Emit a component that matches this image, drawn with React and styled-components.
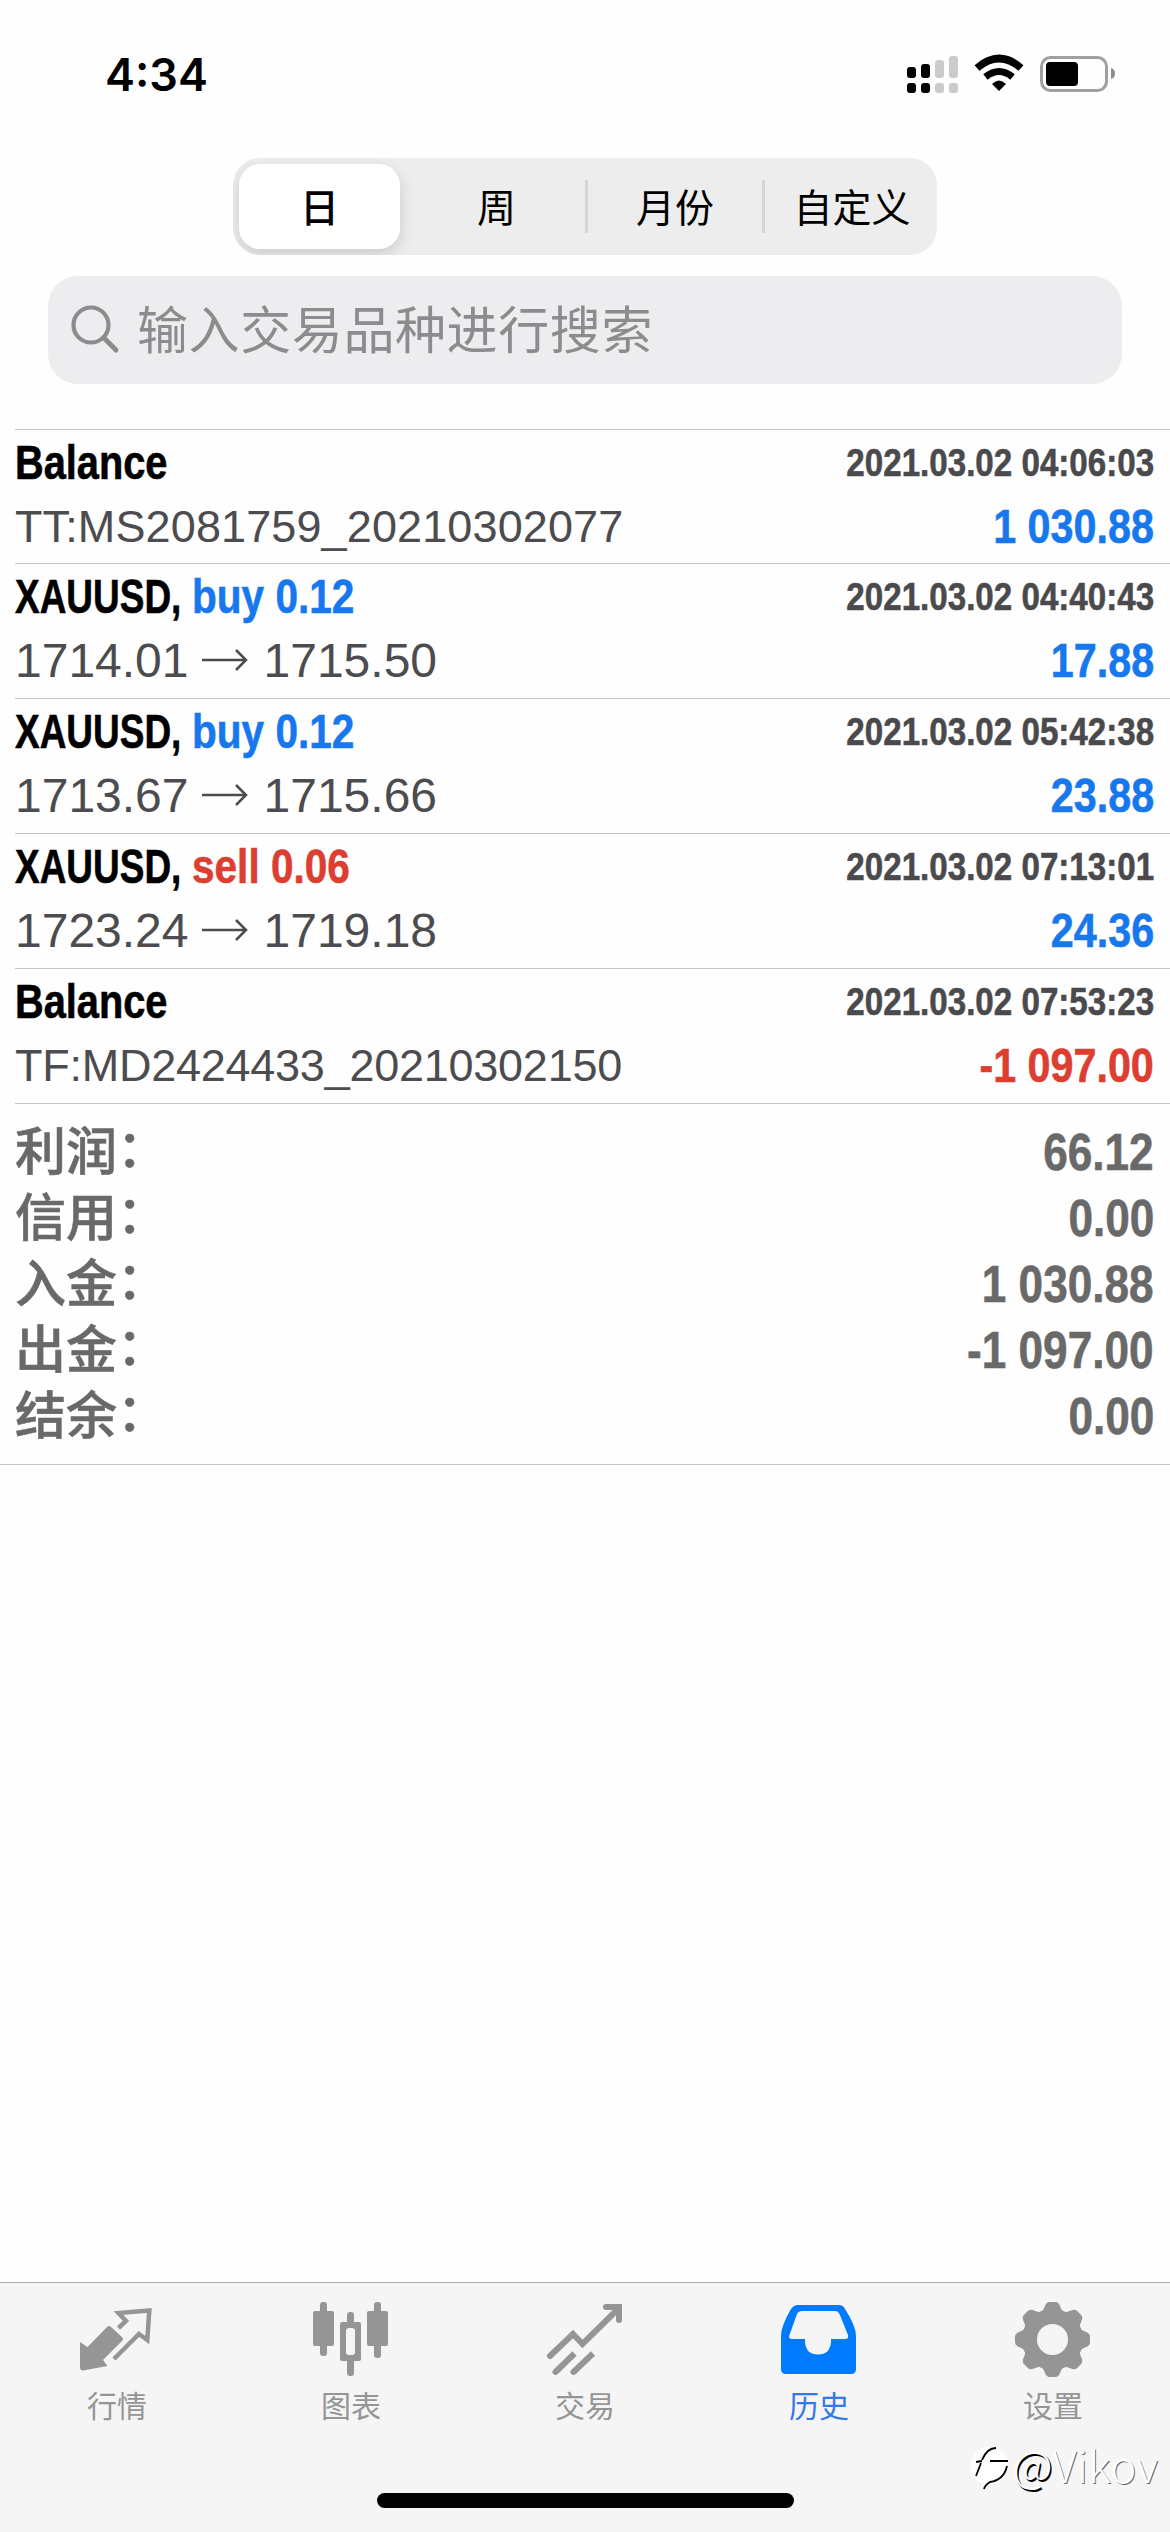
import React from "react";
import styled, { createGlobalStyle } from "styled-components";

const GlobalStyle = createGlobalStyle`
  * {
    box-sizing: border-box;
  }

  body {
    margin: 0;
    background: #fefefe;
    font-family: "Liberation Sans", "Noto Sans CJK SC", sans-serif;
  }
`;

const Screen = styled.div`
  width: 1170px;
  height: 2532px;
  display: flex;
  flex-direction: column;
  overflow: hidden;
`;

const StatusBar = styled.div`
  height: 158px;
  padding: 46px 54px 0 105px;
  display: flex;
  justify-content: space-between;
  align-items: flex-start;
`;

const Clock = styled.div`
  font-family: Inter, sans-serif;
  font-weight: 600;
  font-size: 45px;
  line-height: 57px;
`;

const StatusIcons = styled.svg`
  width: 210px;
  height: 40px;
  margin-top: 7px;
`;

const Segments = styled.div`
  width: 704px;
  height: 97px;
  margin-left: 233px;
  border-radius: 27px;
  background: #ededed;
  display: grid;
  grid-template-columns: repeat(4, 177px);
  justify-content: center;
  align-items: center;
  overflow: hidden;
`;

const Segment = styled.div`
  height: ${(props) => (props.$active ? "85px" : "53px")};
  margin: ${(props) => (props.$active ? "0 8px" : "0")};
  border-radius: ${(props) => (props.$active ? "21px" : "0")};
  border-left: ${(props) => (props.$divided ? "3px solid #d5d5d6" : "none")};
  background: ${(props) => (props.$active ? "#fff" : "none")};
  box-shadow: ${(props) =>
    props.$active ? "0 6px 16px rgba(0, 0, 0, 0.14)" : "none"};
  padding-bottom: 3px;
  display: flex;
  align-items: center;
  justify-content: center;
  font-family: "Noto Sans CJK SC", sans-serif;
  font-weight: ${(props) => (props.$active ? 500 : 400)};
  font-size: 39px;
  line-height: 53px;
`;

const SearchBox = styled.div`
  height: 108px;
  margin: 21px 48px 45px;
  padding-left: 22px;
  border-radius: 30px;
  background: #ededef;
  color: #8c8c8e;
  display: flex;
  align-items: center;
`;

const SearchIcon = styled.svg`
  width: 50px;
  height: 50px;
  margin-right: 17px;
`;

const Placeholder = styled.div`
  padding-bottom: 6px;
  font-family: "Noto Sans CJK SC", sans-serif;
  font-size: 51px;
  line-height: 70px;
  letter-spacing: 0.6px;
`;

const Deals = styled.div`
  margin-left: 15px;
  border-top: 1px solid #c6c6c8;
`;

const Deal = styled.div`
  height: 135px;
  padding: 3px 16px 0 0;
  border-bottom: 1px solid #c6c6c8;

  &:first-child {
    height: 134px;
  }
`;

const Line = styled.div`
  display: flex;
  justify-content: space-between;
  line-height: ${(props) => props.$height}px;
  white-space: nowrap;
`;

/* stands in for a condensed bold face */
const Condensed = styled.div`
  font-weight: bold;
  transform: scaleX(${(props) => props.$ratio});
  transform-origin: ${(props) => (props.$right ? "right" : "left")};
  -webkit-text-stroke: 0.6px currentColor;
`;

const Title = styled.div`
  display: flex;
  font-size: 48px;
`;

const Symbol = styled(Condensed)`
  width: 177px;
`;

const Side = styled(Condensed)`
  color: ${(props) => (props.$sell ? "#dc3e31" : "#1778ee")};
`;

const Time = styled(Condensed)`
  color: #4a4a4d;
  font-size: 39px;
`;

const Comment = styled.div`
  color: #4c4c4f;
  font-size: 45px;
  letter-spacing: ${(props) => props.$tracking}px;
`;

const Prices = styled.div`
  color: #4c4c4f;
  font-size: 48px;
  display: flex;
  align-items: center;
`;

const PriceArrow = styled.svg`
  width: 46px;
  height: 22px;
  margin: 0 16px 2px 13px;
`;

const Profit = styled(Condensed)`
  color: ${(props) => (props.$loss ? "#dc3e31" : "#1778ee")};
  font-size: 48px;
`;

const Totals = styled.div`
  height: 361px;
  padding: 16px 16px 0 15px;
  border-bottom: 1px solid #c6c6c8;
  color: #696969;
`;

const Total = styled.div`
  height: 66px;
  display: flex;
  justify-content: space-between;
  line-height: 66px;
  font-size: 51px;
`;

const TotalLabel = styled.div`
  display: flex;
  font-weight: 500;
  -webkit-text-stroke: 0.6px currentColor;
`;

/* lifts the full-width colon to the middle of the characters */
const Colon = styled.div`
  transform: translateY(-3px);
`;

const TabBar = styled.div`
  position: relative;
  height: 250px;
  margin-top: auto;
  border-top: 1px solid #a9a9a9;
  background: #f5f5f5;
  display: flex;
  flex-direction: column;
  align-items: center;
  justify-content: space-between;
  padding-bottom: 24px;
`;

const Tabs = styled.div`
  width: 100%;
  display: grid;
  grid-template-columns: repeat(5, 1fr);
`;

const Tab = styled.div`
  padding-top: 16px;
  color: ${(props) => (props.$active ? "#3478e8" : "#959595")};
  display: flex;
  flex-direction: column;
  align-items: center;
  font-family: "Noto Sans CJK SC", sans-serif;
  font-size: 30px;
  line-height: 40px;
`;

const TabIcon = styled.svg`
  width: 84px;
  height: 84px;
  margin-bottom: 1px;
`;

const HomeIndicator = styled.div`
  width: 417px;
  height: 15px;
  border-radius: 8px;
  background: #000;
`;

const Watermark = styled.div`
  position: absolute;
  right: 12px;
  bottom: 38px;
  display: flex;
  align-items: center;
  color: #fff;
  font-family: "Noto Sans CJK SC", sans-serif;
  font-weight: 300;
  font-size: 44px;
  line-height: 60px;
  text-shadow: 1px 1px 0 rgba(0, 0, 0, 0.6);
`;

const At = styled.span`
  text-shadow: 1px 1px 0 #000, 1.5px 1.5px 0 #000;
`;

const WatermarkLogo = styled.svg`
  width: 42px;
  height: 50px;
  margin: 4px 3px 0 0;
`;

const segments = ["日", "周", "月份", "自定义"];

const deals = [
  {
    title: "Balance",
    time: "2021.03.02 04:06:03",
    comment: "TT:MS2081759_20210302077",
    tracking: 0.12,
    profit: "1 030.88",
  },
  {
    title: "XAUUSD,",
    side: "buy",
    volume: "0.12",
    time: "2021.03.02 04:40:43",
    open: "1714.01",
    close: "1715.50",
    profit: "17.88",
  },
  {
    title: "XAUUSD,",
    side: "buy",
    volume: "0.12",
    time: "2021.03.02 05:42:38",
    open: "1713.67",
    close: "1715.66",
    profit: "23.88",
  },
  {
    title: "XAUUSD,",
    side: "sell",
    volume: "0.06",
    time: "2021.03.02 07:13:01",
    open: "1723.24",
    close: "1719.18",
    profit: "24.36",
  },
  {
    title: "Balance",
    time: "2021.03.02 07:53:23",
    comment: "TF:MD2424433_20210302150",
    tracking: -0.25,
    profit: "-1 097.00",
  },
];

const totals = [
  ["利润", "66.12"],
  ["信用", "0.00"],
  ["入金", "1 030.88"],
  ["出金", "-1 097.00"],
  ["结余", "0.00"],
];

const QuotesIcon = () => (
  <TabIcon viewBox="0 0 84 84" fill="none">
    <path
      d="M5 43 L12.500 48 L32 28 Q34 26 36 28 L47 38 Q49 40 47 42 L28 61 L32.500 67 L8 71.500 Q5 71.500 5 68Z"
      fill="currentColor"
    />
    <path
      d="M43.500 29 L51 22 L43.500 14 L74.300 11.500 L72.300 41 L64 35 L39 60"
      stroke="currentColor"
      strokeWidth="4.500"
    />
  </TabIcon>
);

const ChartIcon = () => (
  <TabIcon viewBox="0 0 84 84" fill="currentColor">
    <rect x="11" y="3" width="7" height="54" rx="3" />
    <rect x="4" y="12" width="21" height="35" rx="2" />
    <rect x="38" y="13" width="7" height="64" rx="3" />
    <rect x="31" y="23" width="21" height="39" rx="2" />
    <rect x="37" y="29" width="9" height="27" rx="3" fill="#f5f5f5" />
    <rect x="65" y="3" width="7" height="56" rx="3" />
    <rect x="58" y="12" width="21" height="35" rx="2" />
  </TabIcon>
);

const TradeIcon = () => (
  <TabIcon
    viewBox="0 0 84 84"
    fill="none"
    stroke="currentColor"
    strokeWidth="6"
    strokeLinecap="round"
  >
    <path d="M7 57 L30 35 L39.500 45 L75 10" />
    <path d="M63 8 H76 V21" />
    <path d="M12.500 73 L31.500 54.500" strokeLinecap="butt" />
    <path d="M12.500 73 L13.500 72" />
    <path d="M30.500 73 L50 54.500" strokeLinecap="butt" />
    <path d="M30.500 73 L31.500 72" />
  </TabIcon>
);

const HistoryIcon = () => (
  <TabIcon viewBox="0 0 84 84">
    <path
      d="M21 6 H62 Q66 6 68 10 Q79 27 79 37 V70 Q79 75 74 75 H9 Q4 75 4 70 V37 Q4 27 14 10 Q17 6 21 6Z"
      fill="#007aff"
    />
    <path
      d="M25 12 H58 Q61 12 62.500 15 L71 36 Q72 40 68 40 H54 V43 Q53 55.500 41 55.500 Q29 55.500 28 43 V40 H15 Q11 40 12.500 36 L20 15 Q21.500 12 25 12Z"
      fill="#f5f5f5"
    />
  </TabIcon>
);

const SettingsIcon = () => (
  <TabIcon viewBox="0 0 84 84" fill="currentColor">
    <circle cx="41.500" cy="40.500" r="23" fill="none" stroke="currentColor" strokeWidth="15" />
    {[0, 45, 90, 135, 180, 225, 270, 315].map((angle) => (
      <path
        key={angle}
        d="M27.500 15 Q32 13 34 7 Q35.500 3 38.500 3 H44.500 Q47.500 3 49 7 Q51 13 55.500 15Z"
        transform={`rotate(${angle} 41.500 40.500)`}
      />
    ))}
  </TabIcon>
);

const tabs = [
  { name: "行情", Icon: QuotesIcon },
  { name: "图表", Icon: ChartIcon },
  { name: "交易", Icon: TradeIcon },
  { name: "历史", Icon: HistoryIcon, active: true },
  { name: "设置", Icon: SettingsIcon },
];

const Status = () => (
  <StatusBar>
    <Clock>4:34</Clock>
    <StatusIcons viewBox="906 53 210 40">
      <rect x="907" y="67" width="9" height="11" rx="3" />
      <rect x="921" y="64" width="9" height="14" rx="3" />
      <rect x="935" y="60" width="9" height="18" rx="3" fill="#cbcbcb" />
      <rect x="949" y="56" width="9" height="22" rx="3" fill="#cbcbcb" />
      <rect x="907" y="83" width="9" height="10" rx="3" />
      <rect x="921" y="83" width="9" height="10" rx="3" />
      <rect x="935" y="83" width="9" height="10" rx="3" fill="#cbcbcb" />
      <rect x="949" y="83" width="9" height="10" rx="3" fill="#cbcbcb" />
      <path d="M977 68 Q999 49 1021 68" fill="none" stroke="#000" strokeWidth="7.500" />
      <path d="M985.500 77 Q999 66 1012.500 77" fill="none" stroke="#000" strokeWidth="7" />
      <path d="M992 84 Q999 77 1006 84 L999 91Z" />
      <rect x="1041.500" y="57.500" width="65" height="33" rx="9" fill="none" stroke="#a0a0a0" strokeWidth="3" />
      <rect x="1046" y="62" width="32" height="24" rx="4" />
      <path d="M1111 68 Q1115 69 1115 73.500 Q1115 78 1111 79Z" fill="#8c8c8c" />
    </StatusIcons>
  </StatusBar>
);

const DealCard = (props) => {
  const { deal } = props;

  return (
    <Deal>
      <Line $height={60}>
        <Title>
          <Symbol $ratio={deal.side ? 0.77 : 0.828}>{deal.title}</Symbol>
          {deal.side && (
            <Side $ratio={0.845} $sell={deal.side === "sell"}>
              {deal.side} {deal.volume}
            </Side>
          )}
        </Title>
        <Time $ratio={0.85} $right>
          {deal.time}
        </Time>
      </Line>
      <Line $height={67}>
        {deal.comment ? (
          <Comment $tracking={deal.tracking}>{deal.comment}</Comment>
        ) : (
          <Prices>
            {deal.open}
            <PriceArrow viewBox="0 0 46 22" fill="none" stroke="currentColor" strokeWidth="2.500">
              <path d="M0 11 H44 M34 1 L44 11 L34 21" />
            </PriceArrow>
            {deal.close}
          </Prices>
        )}
        <Profit $ratio={0.86} $right $loss={deal.profit.startsWith("-")}>
          {deal.profit}
        </Profit>
      </Line>
    </Deal>
  );
};

const App = () => (
  <Screen>
    <GlobalStyle />
    <Status />
    <Segments>
      {segments.map((name, i) => (
        <Segment key={name} $active={i === 0} $divided={i > 1}>
          {name}
        </Segment>
      ))}
    </Segments>
    <SearchBox>
      <SearchIcon viewBox="0 0 50 50" fill="none" stroke="currentColor">
        <circle cx="21" cy="20" r="17.500" strokeWidth="4.200" />
        <path d="M34 33 L46 45" strokeWidth="5" strokeLinecap="round" />
      </SearchIcon>
      <Placeholder>输入交易品种进行搜索</Placeholder>
    </SearchBox>
    <Deals>
      {deals.map((deal) => (
        <DealCard key={deal.time} deal={deal} />
      ))}
    </Deals>
    <Totals>
      {totals.map(([label, value]) => (
        <Total key={label}>
          <TotalLabel lang="zh-CN">
            {label}
            <Colon>：</Colon>
          </TotalLabel>
          <Condensed $ratio={0.865} $right>
            {value}
          </Condensed>
        </Total>
      ))}
    </Totals>
    <TabBar>
      <Tabs>
        {tabs.map(({ name, Icon, active }) => (
          <Tab key={name} $active={active}>
            <Icon />
            {name}
          </Tab>
        ))}
      </Tabs>
      <HomeIndicator />
      <Watermark>
        <WatermarkLogo viewBox="0 0 42 50" fill="none" stroke="#000" strokeWidth="1.800">
          <circle cx="21" cy="25" r="19" fill="#fff" stroke="none" />
          <path d="M14 19 Q19 7 28 7 M8 21 L14 20 M22 20 H40 M13 22 L8 35" />
          <path d="M39 25 Q36 39 22 41 Q17 44 16 48" />
        </WatermarkLogo>
        <At>@</At>
        Vikov
      </Watermark>
    </TabBar>
  </Screen>
);

export default App;
